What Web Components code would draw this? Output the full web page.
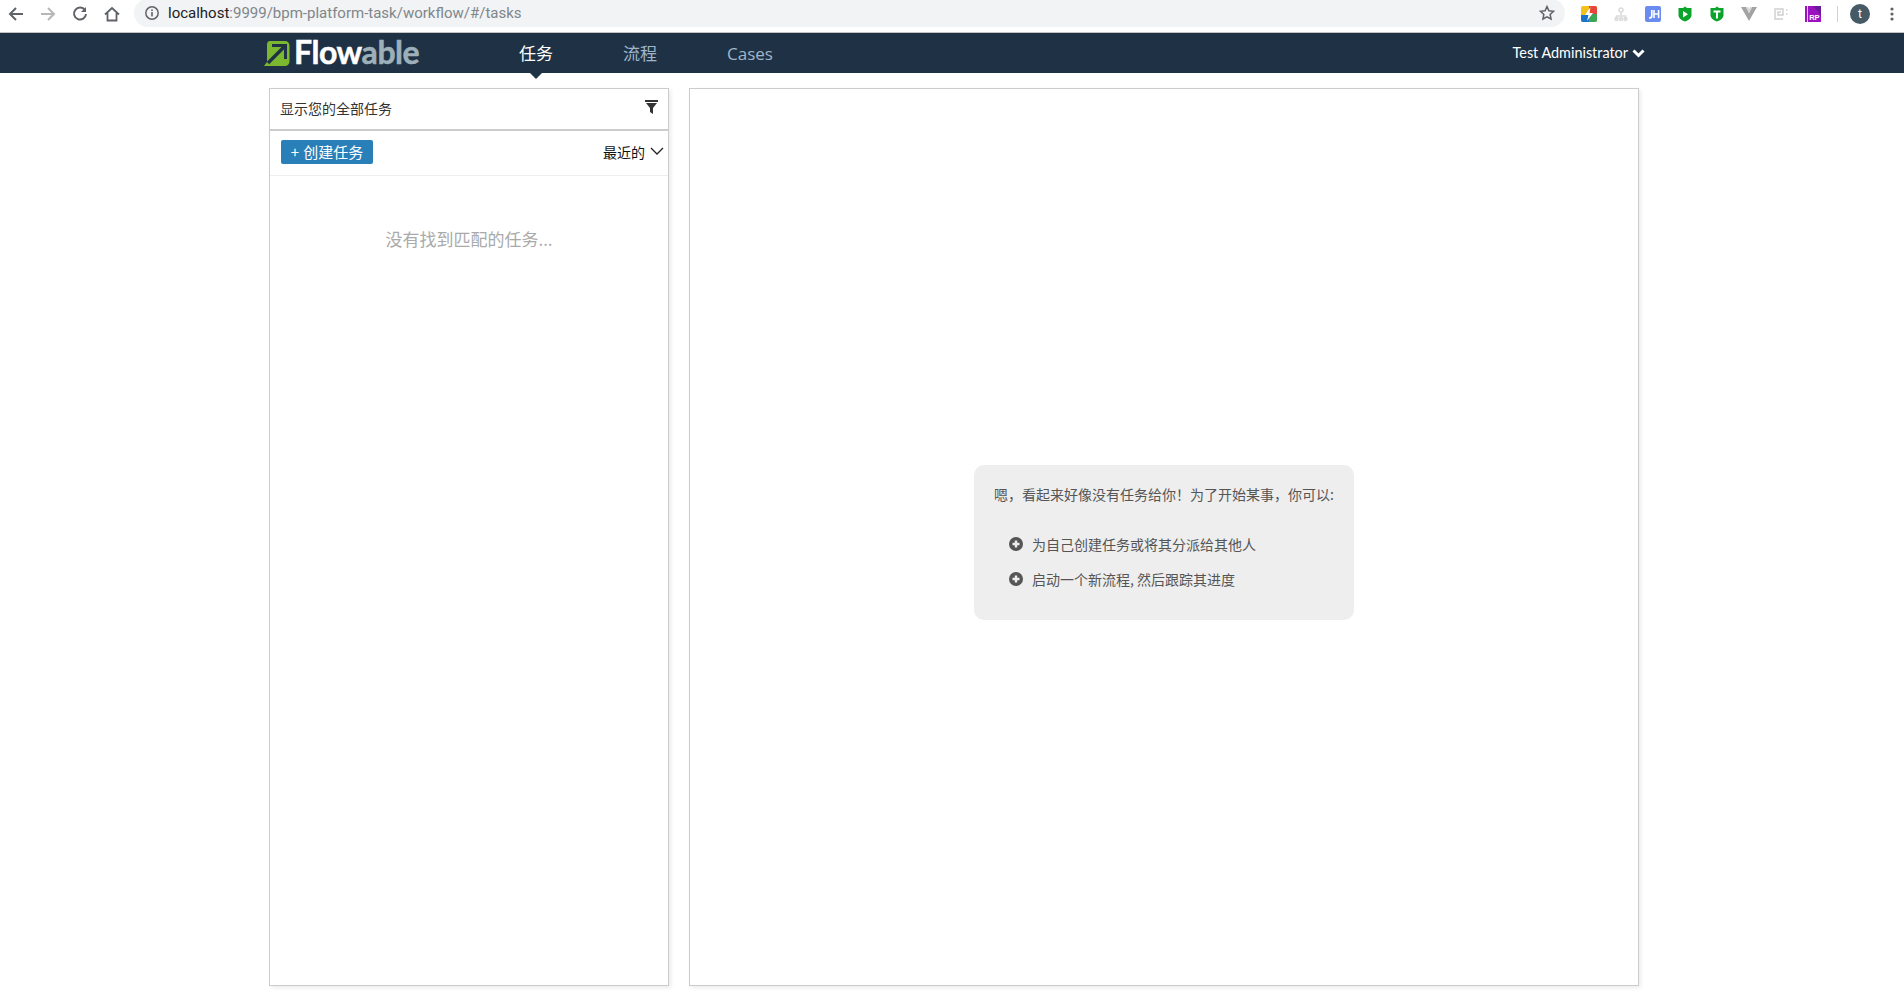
<!DOCTYPE html>
<html lang="zh"><head><meta charset="utf-8"><title>Flowable</title>
<style>
html,body{margin:0;height:100%;background:#fff;overflow:hidden;font-family:"Lato","Noto Sans CJK SC",sans-serif}
</style></head><body>
<flow-app>
  <browser-bar slot="bar"></browser-bar>
  <app-nav slot="nav"></app-nav>
  <task-list slot="left"></task-list>
  <help-panel slot="right"></help-panel>
</flow-app>
<script>
function def(name, html){
  customElements.define(name, class extends HTMLElement{
    constructor(){super();const r=this.attachShadow({mode:'open'});r.innerHTML=html;}
  });
}
def('flow-app',`<style>
:host{display:flex;flex-direction:column;height:993px;width:1904px}
.main{display:flex;gap:20px;padding:15px 0 0 269px;box-sizing:border-box}
</style><slot name="bar"></slot><slot name="nav"></slot>
<div class="main"><slot name="left"></slot><slot name="right"></slot></div>`);

def('browser-bar',`<style>
:host{display:flex;align-items:center;box-sizing:border-box;height:33px;border-bottom:1px solid #c4c4c4;background:#fff;padding-bottom:4px;font-family:"Roboto","Liberation Sans",sans-serif}
svg{display:block;flex:none}
.nav{display:flex;align-items:center;gap:14px;padding-left:7px;width:134px;box-sizing:border-box}
.pill{flex:none;width:1431px;height:28px;margin-top:-3px;background:#f1f3f4;border-radius:14px;display:flex;align-items:center;padding-left:10px;box-sizing:border-box;position:relative}
.url{font-size:15px;color:#80868b;margin:1px 0 0 8px;white-space:nowrap}
.url b{font-weight:400;color:#202124}
.star{position:absolute;right:9px;top:5px}
.ext{display:flex;align-items:center;gap:16px;margin-left:16px}
.ext svg{width:16px;height:16px}
.sep{width:1px;height:16px;background:#d0d2d4}
.av{width:20px;height:20px;border-radius:50%;background:#455a64;color:#fff;font-size:12px;display:flex;align-items:center;justify-content:center;margin-left:-4px}
.dots{margin-left:-2px}
</style>
<div class="nav">
<svg width="18" height="18" viewBox="0 0 18 18" fill="none" stroke="#5f6368" stroke-width="2"><path d="M16 9H3M9 3L3 9l6 6"/></svg>
<svg width="18" height="18" viewBox="0 0 18 18" fill="none" stroke="#b5b7b9" stroke-width="2"><path d="M2 9h13M9 3l6 6-6 6"/></svg>
<svg width="18" height="18" viewBox="0 0 18 18" fill="none" stroke="#5f6368" stroke-width="2"><path d="M14 5.200A6 6 0 1 0 15 9"/><path d="M15 2v5h-5" fill="#5f6368" stroke="none"/></svg>
<svg width="18" height="18" viewBox="0 0 18 18" fill="none" stroke="#5f6368" stroke-width="1.800"><path d="M2 9.500L9 3l7 6.500M4.500 8v7.500h9V8"/></svg>
</div>
<div class="pill">
<svg width="16" height="16" viewBox="0 0 16 16"><circle cx="8" cy="8" r="6.200" fill="none" stroke="#5f6368" stroke-width="1.500"/><rect x="7.200" y="7" width="1.600" height="4.400" fill="#5f6368"/><rect x="7.200" y="4.400" width="1.600" height="1.600" fill="#5f6368"/></svg>
<span class="url"><b>localhost</b>:9999/bpm-platform-task/workflow/#/tasks</span>
<svg class="star" width="18" height="18" viewBox="0 0 24 24" fill="none" stroke="#5f6368" stroke-width="2"><path d="M12 3.500l2.600 5.600 6.100.7-4.500 4.200 1.200 6-5.400-3-5.400 3 1.200-6-4.500-4.200 6.100-.7z"/></svg>
</div>
<div class="ext">
<svg viewBox="0 0 16 16"><rect width="16" height="16" rx="2" fill="#f2c21a"/><path d="M16 2v6H8V0h6a2 2 0 0 1 2 2z" fill="#e8453c"/><path d="M0 14V9h8v7H2a2 2 0 0 1-2-2z" fill="#1a73c8"/><path d="M8 16V8h8v6a2 2 0 0 1-2 2z" fill="#3aa757"/><path d="M9.500 1L4 9h3.500L6 15l6-8H8.500z" fill="#fff"/></svg>
<svg viewBox="0 0 16 16" fill="none" stroke="#dcdcdc" stroke-width="1.600"><circle cx="8" cy="4" r="2"/><path d="M8 6v3M3.500 13v-3h9v3"/><circle cx="3.500" cy="13" r="1.400"/><circle cx="8" cy="13" r="1.400"/><circle cx="12.500" cy="13" r="1.400"/></svg>
<svg viewBox="0 0 16 16"><rect width="16" height="16" rx="2" fill="#6a8cf0"/><path d="M6.800 4v6c0 1.400-.9 2-2.800 2" fill="none" stroke="#fff" stroke-width="1.700"/><path d="M9 4v8M13.600 4v8M9 8h4.600" fill="none" stroke="#fff" stroke-width="1.600"/></svg>
<svg viewBox="0 0 16 16"><path d="M8 .5l2 1.500h4.500v7c0 3-3 5.500-6.500 6.500C4.500 14.500 1.500 12 1.500 9V2H6z" fill="#0ba42a"/><path d="M6 5l5 3.300-5 3.300z" fill="#fff"/></svg>
<svg viewBox="0 0 16 16"><path d="M8 .5l2 1.500h4.500v7c0 3-3 5.500-6.500 6.500C4.500 14.500 1.500 12 1.500 9V2H6z" fill="#0ba42a"/><path d="M4.500 4.500h7v2H9v6H7v-6H4.500z" fill="#fff"/></svg>
<svg viewBox="0 0 16 16"><path d="M0 1h5l3 6 3-6h5L8 15z" fill="#a3a3a3"/><path d="M5 1h2l1 2 1-2h2L8 7z" fill="#d5d5d5"/></svg>
<svg viewBox="0 0 16 16" fill="none" stroke="#cfcfcf" stroke-width="1.400"><path d="M10 13H2V3h8v6H5V6h3"/><path d="M13 4h1.500M13 8h1.500"/></svg>
<svg viewBox="0 0 16 16"><rect width="16" height="16" fill="#9b12c0"/><path d="M2 0h1v16H2z" fill="#f0c8ff"/><path d="M16 0v9L8 0z" fill="#6c1a9a"/><text x="4.200" y="14" font-size="7.500" font-family="Liberation Sans" font-weight="700" fill="#fff">RP</text></svg>
<div class="sep"></div><div class="av">t</div>
<svg class="dots" viewBox="0 0 16 16" fill="#5f6368"><circle cx="8" cy="3" r="1.600"/><circle cx="8" cy="8" r="1.600"/><circle cx="8" cy="13" r="1.600"/></svg>
</div>`);

def('app-nav',`<style>
:host{display:flex;position:relative;height:40px;background:#1f3245;color:#fff;font-family:"Open Sans","Noto Sans CJK SC",sans-serif;align-items:center;box-sizing:border-box;padding-left:264px}
.logo{display:flex;align-items:center;width:162px;gap:4px}
.logo svg{display:block;flex:none}
.word{font:700 32px/40px "Lato",sans-serif;letter-spacing:-.45px;color:#fff;margin-top:-2px;-webkit-text-stroke:.5px currentColor}
.word span{color:#9db0ba}
nav{display:flex;margin-left:58px}
a{display:block;padding:0 35px;font-size:17px;color:#9fb6c9;line-height:40px;position:relative;margin-top:1px}
a.on{color:#fff}
a.on::after{content:"";position:absolute;left:50%;margin-left:-6px;top:39px;border:6px solid transparent;border-top-color:#1f3245;border-bottom:0}
.user{position:absolute;right:259px;top:0;font:14.4px/40px "Lato","Open Sans",sans-serif;color:#fff;display:flex;align-items:center;gap:4px}
</style>
<div class="logo">
<svg width="26" height="25" viewBox="0 0 26 25"><path d="M5 0h16a4.500 4.500 0 0 1 4.500 4.500v16A4.500 4.500 0 0 1 21 25H0l3-4V3a4 4 0 0 1 2-3z" fill="#7cb82f"/><path d="M8 4.500h13.500V18" fill="none" stroke="#1f3245" stroke-width="3"/><path d="M20.500 5.500L4 22" fill="none" stroke="#1f3245" stroke-width="3.400"/></svg>
<div class="word">Flow<span>able</span></div>
</div>
<nav><a class="on">任务</a><a>流程</a><a>Cases</a></nav>
<div class="user">Test Administrator <svg width="13" height="10" viewBox="0 0 13 10"><path d="M1.500 2.500l5 5 5-5" fill="none" stroke="#fff" stroke-width="3"/></svg></div>`);

const panelCss=`box-sizing:border-box;background:#fff;border:1px solid #ccc;box-shadow:2px 2px 4px rgba(0,0,0,.08);height:898px;`;
def('task-list',`<style>
:host{display:block;${panelCss}width:400px;font-family:"Noto Sans CJK SC",sans-serif;color:#333}
.head{height:38px;padding:0 10px 2px 10px;border-bottom:2px solid #ccc;display:flex;align-items:center;justify-content:space-between;font-size:14px}
.head svg{margin-top:-2px}
.tool{height:42px;padding:0 4px 2px 11px;border-bottom:1px solid #eee;display:flex;align-items:center;justify-content:space-between}
button{all:unset;box-sizing:border-box;width:92px;height:24px;background:#2980b9;color:#fff;border-radius:2px;font-size:15px;text-align:center;line-height:24px;word-spacing:1px}
.sort{display:flex;align-items:center;gap:5px;font-size:14px;color:#111;margin-top:-1px}
.sort svg{margin-top:-1px}
.empty{text-align:center;color:#aaa;font-size:17px;line-height:24px;margin-top:51px}
</style>
<div class="head">显示您的全部任务<svg width="13" height="14" viewBox="0 0 13 14"><path d="M0 0h13v2H0z" fill="#333"/><path d="M1 3h11L8 8v6l-3-2V8z" fill="#333"/></svg></div>
<div class="tool"><button>+ 创建任务</button><div class="sort">最近的<svg width="14" height="9" viewBox="0 0 14 9"><path d="M1 1l6 6 6-6" fill="none" stroke="#222" stroke-width="1.300"/></svg></div></div>
<div class="empty">没有找到匹配的任务...</div>`);

def('help-panel',`<style>
:host{display:flex;${panelCss}width:950px;align-items:center;justify-content:center;font-family:"Noto Sans CJK SC",sans-serif}
.card{width:380px;height:155px;box-sizing:border-box;background:#eee;border-radius:10px;padding:19px 20px;color:#555;font-size:14px;margin-top:11px}
.t{line-height:20px;white-space:nowrap}
ul{list-style:none;margin:22px 0 0;padding:0 0 0 15px}
li{display:flex;align-items:center;gap:9px;height:35px}
svg{display:block;flex:none}
</style>
<div class="card"><div class="t">嗯，看起来好像没有任务给你！为了开始某事，你可以:</div>
<ul><li><svg width="14" height="14" viewBox="0 0 14 14"><circle cx="7" cy="7" r="7" fill="#555"/><path d="M7 3.500v7M3.500 7h7" stroke="#eee" stroke-width="2.400"/></svg>为自己创建任务或将其分派给其他人</li>
<li><svg width="14" height="14" viewBox="0 0 14 14"><circle cx="7" cy="7" r="7" fill="#555"/><path d="M7 3.500v7M3.500 7h7" stroke="#eee" stroke-width="2.400"/></svg>启动一个新流程, 然后跟踪其进度</li></ul></div>`);
</script>
</body></html>
